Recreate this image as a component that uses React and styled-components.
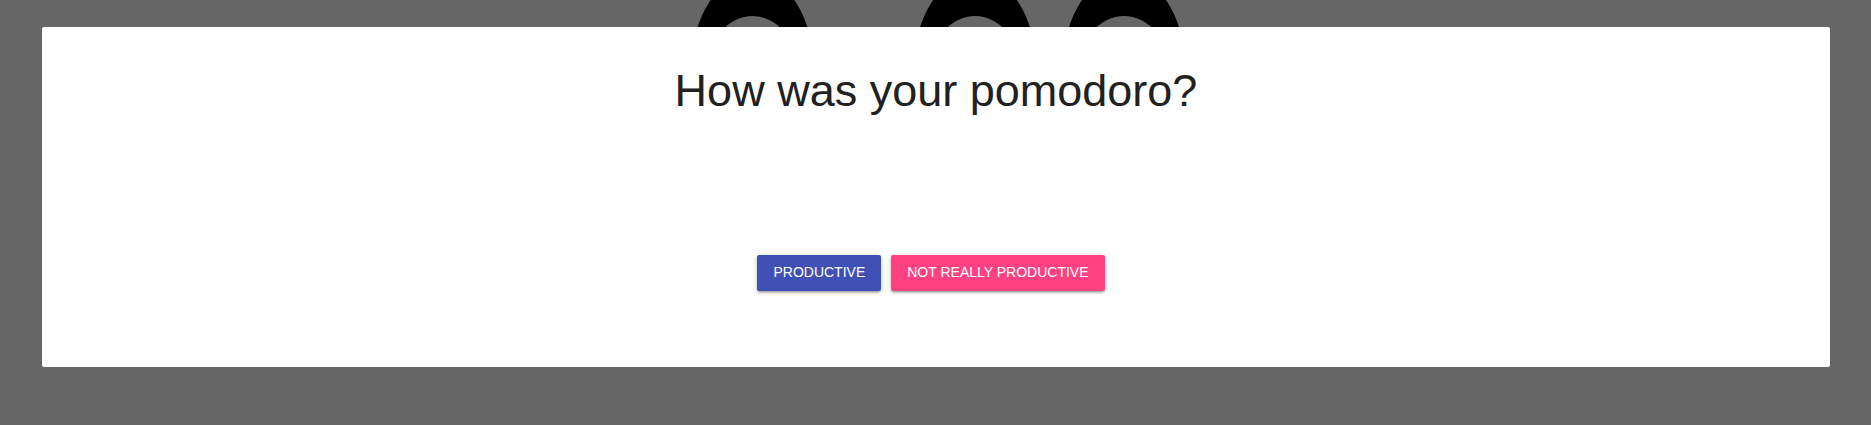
import React from "react";
import styled, { createGlobalStyle } from "styled-components";

const GlobalStyle = createGlobalStyle`
  html, body {
    margin: 0;
    padding: 0;
    height: 100%;
    background: #ffffff;
    font-family: "Liberation Sans", Arial, sans-serif;
  }
  #root { height: 100%; }
`;

const Page = styled.main`
  position: relative;
  height: 100vh;
  overflow: hidden;
  background: #ffffff;
`;

const TimerDigits = styled.svg`
  position: absolute;
  left: 0;
  top: 0;
  display: block;
`;

const Overlay = styled.div`
  position: fixed;
  inset: 0;
  background: rgba(0, 0, 0, 0.6);
  padding: 27px 41px 0 42px;
  box-sizing: border-box;
`;

const Dialog = styled.section`
  background: #ffffff;
  height: 340px;
  border-radius: 2px;
  box-sizing: border-box;
  padding-top: 36px;
  display: flex;
  flex-direction: column;
  align-items: center;
`;

const Title = styled.h1`
  margin: 0;
  font-family: "Liberation Sans", Arial, sans-serif;
  font-weight: 400;
  font-size: 45px;
  line-height: 55px;
  color: #212121;
  text-align: center;
`;

const Actions = styled.div`
  margin-top: 137px;
  padding-right: 10px;
  display: flex;
  gap: 10px;
  justify-content: center;
`;

const Button = styled.button`
  height: 36px;
  min-width: 88px;
  padding: 0 16px 2px;
  border: none;
  border-radius: 2px;
  background: ${(p) => (p.$tone === "secondary" ? "#ff4081" : "#3f51b5")};
  color: #ffffff;
  font-family: "Liberation Sans", Arial, sans-serif;
  font-size: 14px;
  font-weight: 400;
  text-transform: uppercase;
  cursor: pointer;
  box-shadow: 0px 1px 5px 0px rgba(0, 0, 0, 0.2),
    0px 2px 2px 0px rgba(0, 0, 0, 0.14),
    0px 3px 1px -2px rgba(0, 0, 0, 0.12);
`;

const ring = (cx) =>
  `M ${cx - 61} 67 a 61 92 0 1 0 122 0 a 61 92 0 1 0 -122 0 Z ` +
  `M ${cx - 44} 67 a 44 51 0 1 1 88 0 a 44 51 0 1 1 -88 0 Z`;

export default function App() {
  return (
    <>
      <GlobalStyle />
      <Page>
        <TimerDigits width="1871" height="200" viewBox="0 0 1871 200" aria-hidden="true">
          {[752.5, 975, 1124].map((cx) => (
            <path key={cx} d={ring(cx)} fill="#000" fillRule="evenodd" />
          ))}
        </TimerDigits>
        <Overlay>
          <Dialog>
            <Title>How was your pomodoro?</Title>
            <Actions>
              <Button $tone="primary">Productive</Button>
              <Button $tone="secondary">Not really productive</Button>
            </Actions>
          </Dialog>
        </Overlay>
      </Page>
    </>
  );
}
